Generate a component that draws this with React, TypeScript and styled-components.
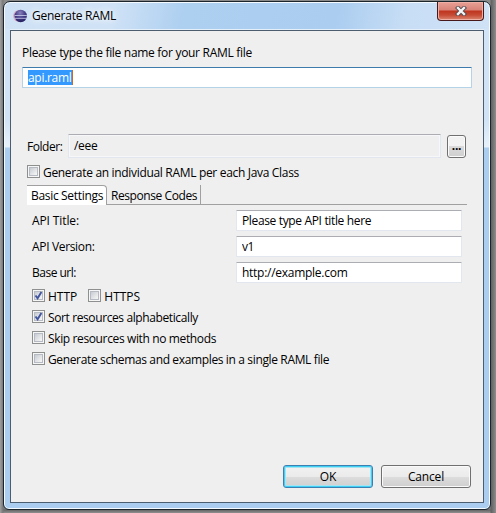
import React, { useState } from "react";
import styled, { createGlobalStyle, css } from "styled-components";

const GlobalStyle = createGlobalStyle`
  * { box-sizing: border-box; }
  body {
    margin: 0;
    overflow: hidden;
    font: 12px/16px "Open Sans", "Noto Sans", sans-serif;
    color: #000;
  }
`;

const Desktop = styled.main`
  width: 496px;
  height: 513px;
  padding: 1px 5px 3px 3px;
  background:
    linear-gradient(90deg, transparent 490px, #606060 491px, #8d8d8d 496px),
    linear-gradient(90deg, #a0a0a0 0, #777 3px, transparent 4px),
    linear-gradient(#8b8b8b, #777 509px, #666 510px, #909090);
`;

const Window = styled.section`
  display: flex;
  flex-direction: column;
  height: 509px;
  padding: 0 6px 6px;
  border: 1px solid #1c242c;
  border-radius: 7px 7px 6px 6px;
  box-shadow: inset 0 0 0 1px #f4faff;
  background:
    linear-gradient(#d2e4f7 0, #d0e3f6 90px, #e6f0fb 117px, #e6f0fb 118px, transparent 119px) 0 27px / 7px 119px no-repeat,
    linear-gradient(#d2e4f7 0, #d0e3f6 90px, #e6f0fb 117px, #e6f0fb 118px, transparent 119px) 100% 27px / 7px 119px no-repeat,
    linear-gradient(100deg, #cfe2f5 0, #cfe2f6 110px, #adcff0 180px, #abcdf0 330px, #c8def5 400px, #cfe2f6 100%) 0 0 / 100% 30px no-repeat,
    #abcef0;
`;

const TitleBar = styled.header`
  display: flex;
  height: 28px;
  flex: none;
  padding-left: 3px;
  border-bottom: 1px solid #e4effa;
`;

const TitleIcon = styled.svg`
  width: 14px;
  height: 14px;
  margin: 7px 5px 0 0;
`;

const Text = styled.span<{ $track?: number }>`
  height: 16px;
  line-height: 18px;
  white-space: pre;
  letter-spacing: ${(p) => p.$track ?? 0}px;
`;

const Title = styled.h1<{ $track: number }>`
  margin: 6px auto 0 0;
  padding-right: 8px;
  font-size: 12px;
  line-height: 16px;
  font-weight: 400;
  letter-spacing: ${(p) => p.$track}px;
  text-shadow: 0 0 6px #fff, 0 0 8px #fff;
`;

const CloseButton = styled.button`
  display: flex;
  justify-content: center;
  width: 47px;
  height: 19px;
  padding: 4px 0 0;
  border: 1px solid #48191a;
  border-top: 0;
  border-radius: 0 0 4px 4px;
  box-shadow: inset 0 0 0 1px #eeb0a5;
  background: linear-gradient(#e8a196 0, #d98377 8px, #bf351f 9px, #c64a33 13px, #db8873 100%);
`;

const Panel = styled.div`
  display: flex;
  flex: 1;
  flex-direction: column;
  padding: 13px 11px 14px;
  border: 1px solid #4c5d70;
  background: #efefef;
`;

const Field = styled.input<{ $track: number; $kind?: "readonly" }>`
  display: block;
  width: 100%;
  height: 21px;
  padding: 0 5px;
  border: 1px solid #e2e6ee;
  border-top-color: #abadb3;
  border-radius: 1px;
  outline: 0;
  background: #fff;
  color: #000;
  font: inherit;
  letter-spacing: ${(p) => p.$track}px;
  ${(p) =>
    p.$kind === "readonly" &&
    css`
      height: 24px;
      padding: 0 5px 2px;
      box-shadow: inset 0 0 0 1px #f7f7f9;
      background: #efefef;
    `}
`;

const NameField = styled.div`
  display: flex;
  height: 21px;
  margin: 7px 0 46px;
  padding: 2px 5px;
  border: 1px solid #b5d3e7;
  border-top-color: #3d7bad;
  border-radius: 1px;
  background: #fff;
`;

const Selected = styled.span`
  height: 15px;
  border-right: 1px solid #c46a2a;
  background: #3399ff;
  color: #fff;
  line-height: 16px;
  letter-spacing: -0.3px;
`;

const FolderRow = styled.label`
  display: grid;
  grid-template-columns: 41px 373px 25px;
  padding-left: 5px;
  height: 24px;

  > span { padding-top: 4px; }
`;

const BrowseButton = styled.button`
  width: 19px;
  height: 23px;
  margin: 1px 0 0 6px;
  padding: 0 0 2px;
  border: 1px solid #707070;
  border-radius: 3px;
  box-shadow: inset 0 0 0 1px #fbfbfb;
  background: linear-gradient(#f2f2f2 50%, #dadada 50%, #cfcfcf);
  color: #000;
  font: bold 12px/16px "Open Sans", sans-serif;
  letter-spacing: -0.2px;
`;

const CheckLabel = styled.label`
  display: flex;
  align-items: center;
  gap: 3px;
  height: 21px;
`;

const HiddenCheck = styled.input`
  appearance: none;
  width: 0;
  height: 0;
  margin: 0 -3px 0 0;
`;

const CheckBox = styled.span`
  display: block;
  width: 13px;
  height: 13px;
  padding: 1px;
  border: 1px solid #8e8f8f;
  background: #f6f6f6;

  > svg {
    display: block;
    width: 9px;
    height: 9px;
    background: linear-gradient(135deg, #c0c5cd, #f3f3f3 80%);
    box-shadow: inset 0 0 0 1px #b6bac2;
  }
`;

const Individual = styled.div`
  padding: 3px 0 0 5px;
`;

const Tabs = styled.div`
  display: flex;
  height: 20px;
  margin: 3px 5px 0;
  border-bottom: 1px solid #a0a0a0;
`;

const Tab = styled.button<{ $active?: boolean; $track: number }>`
  width: ${(p) => (p.$active ? 80 : 94)}px;
  height: ${(p) => (p.$active ? 20 : 19)}px;
  padding: ${(p) => (p.$active ? 1 : 3)}px 0 0 4px;
  border: 0;
  border-right: 1px solid #a0a0a0;
  border-top: ${(p) => (p.$active ? "1px solid #a0a0a0" : "0")};
  border-radius: ${(p) => (p.$active ? "0 4px 0 0" : "0")};
  background: ${(p) => (p.$active ? "#fff" : "transparent")};
  color: #000;
  font: inherit;
  text-align: left;
  white-space: nowrap;
  letter-spacing: ${(p) => p.$track}px;
`;

const Settings = styled.div`
  display: grid;
  grid-template-columns: 204px 226px;
  row-gap: 5px;
  padding: 5px 0 0 10px;

  > span { padding-top: 2px; }
`;

const Options = styled.div`
  padding: 2px 0 0 10px;
`;

const OptionRow = styled.div`
  display: flex;
  gap: 11px;
`;

const Actions = styled.footer`
  display: flex;
  justify-content: flex-end;
  gap: 8px;
  margin: auto 1px 0 0;
`;

const ActionButton = styled.button<{ $default?: boolean; $track?: number }>`
  width: 90px;
  height: 23px;
  padding: 0;
  border: 1px solid ${(p) => (p.$default ? "#3c7fb1" : "#707070")};
  border-radius: 3px;
  box-shadow: inset 0 0 0 ${(p) => (p.$default ? "1px #3fd0f5, inset 0 0 0 2px #a9e2f0" : "1px #fafafa")};
  background: linear-gradient(#f2f2f2 0, #ebebeb 50%, #dddddd 50%, #cfcfcf);
  color: #000;
  font: inherit;
  letter-spacing: ${(p) => p.$track ?? 0}px;
`;

function EclipseLogo() {
  return (
    <TitleIcon viewBox="0 0 14 14" aria-hidden="true">
      <defs>
        <radialGradient id="orb" cx="45%" cy="25%" r="75%">
          <stop offset="0" stopColor="#8a83bd" />
          <stop offset="0.55" stopColor="#443b86" />
          <stop offset="1" stopColor="#241f60" />
        </radialGradient>
      </defs>
      <circle cx="6.2" cy="7" r="6.1" fill="#d9a7c4" />
      <circle cx="7.7" cy="7" r="6.2" fill="url(#orb)" />
      <path d="M1.6 6.5h12.2M1.5 9.3h12.3" stroke="#c3c5e6" strokeWidth="0.9" />
    </TitleIcon>
  );
}

function CloseMark() {
  return (
    <svg width="12" height="10" viewBox="0 0 12 10" aria-hidden="true">
      <path d="M3 2l6 6M9 2L3 8" stroke="#544a50" strokeWidth="4.2" strokeLinecap="square" />
      <path d="M3 2l6 6M9 2L3 8" stroke="#f5f5f5" strokeWidth="2.4" strokeLinecap="square" />
    </svg>
  );
}

function Option({ label, track, initial = false }: { label: string; track?: number; initial?: boolean }) {
  const [checked, setChecked] = useState(initial);
  return (
    <CheckLabel>
      <HiddenCheck type="checkbox" checked={checked} onChange={() => setChecked(!checked)} />
      <CheckBox>
        <svg viewBox="0 0 9 9" aria-hidden="true">
          {checked && <path d="M1.5 4.5L3.6 7.3 7.4 1" fill="none" stroke="#4256a0" strokeWidth="1.9" />}
        </svg>
      </CheckBox>
      <Text $track={track}>{label}</Text>
    </CheckLabel>
  );
}

export default function App() {
  return (
    <>
      <GlobalStyle />
      <Desktop>
        <Window>
          <TitleBar>
            <EclipseLogo />
            <Title $track={-0.25}>Generate RAML</Title>
            <CloseButton aria-label="Close"><CloseMark /></CloseButton>
          </TitleBar>
          <Panel>
            <Text $track={-0.3}>Please type the file name for your RAML file</Text>
            <NameField><Selected>api.raml</Selected></NameField>
            <FolderRow>
              <Text $track={-0.44}>Folder:</Text>
              <Field $kind="readonly" $track={-0.28} readOnly defaultValue="/eee" />
              <BrowseButton aria-label="Browse">...</BrowseButton>
            </FolderRow>
            <Individual>
              <Option label="Generate an individual RAML per each Java Class" track={-0.32} />
            </Individual>
            <Tabs>
              <Tab $active $track={-0.32}>Basic Settings</Tab>
              <Tab $track={-0.42}>Response Codes</Tab>
            </Tabs>
            <Settings>
              <Text $track={-0.11}>API Title:</Text>
              <Field $track={-0.35} defaultValue="Please type API title here" />
              <Text $track={-0.34}>API Version:</Text>
              <Field $track={-0.5} defaultValue="v1" />
              <Text $track={-0.5}>Base url:</Text>
              <Field $track={-0.27} defaultValue="http://example.com" />
            </Settings>
            <Options>
              <OptionRow>
                <Option label="HTTP" initial />
                <Option label="HTTPS" />
              </OptionRow>
              <Option label="Sort resources alphabetically" track={-0.39} initial />
              <Option label="Skip resources with no methods" track={-0.37} />
              <Option label="Generate schemas and examples in a single RAML file" track={-0.36} />
            </Options>
            <Actions>
              <ActionButton $default>OK</ActionButton>
              <ActionButton $track={-0.18}>Cancel</ActionButton>
            </Actions>
          </Panel>
        </Window>
      </Desktop>
    </>
  );
}
